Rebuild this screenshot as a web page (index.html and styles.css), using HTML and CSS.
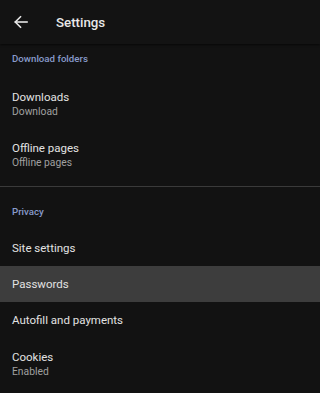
FILE: index.html
```html
<!DOCTYPE html>
<html>
<head>
<meta charset="utf-8">
<link rel="stylesheet" href="styles.css">
</head>
<body>
<div class="app">
  <header class="toolbar">
    <svg class="back" width="16" height="16" viewBox="0 0 16 16" fill="none" stroke="#e8e8e8" stroke-width="1.6" stroke-linecap="square">
      <path d="M14 8H2.5"/>
      <path d="M7.5 2.8L2.3 8l5.2 5.2"/>
    </svg>
    <div class="title">Settings</div>
  </header>
  <div class="section-title first">Download folders</div>
  <div class="item two">
    <div class="item-title">Downloads</div>
    <div class="item-sub">Download</div>
  </div>
  <div class="item two">
    <div class="item-title">Offline pages</div>
    <div class="item-sub">Offline pages</div>
  </div>
  <div class="divider"></div>
  <div class="section-title second">Privacy</div>
  <div class="item one"><div class="item-title">Site settings</div></div>
  <div class="item one active"><div class="item-title">Passwords</div></div>
  <div class="item one"><div class="item-title">Autofill and payments</div></div>
  <div class="item two">
    <div class="item-title">Cookies</div>
    <div class="item-sub">Enabled</div>
  </div>
</div>
</body>
</html>
```
FILE: styles.css
```css
html, body {
  margin: 0;
  padding: 0;
  background: #121212;
}
body {
  font-family: Roboto, "Noto Sans", sans-serif;
  color: #e4e4e4;
}
.app {
  width: 320px;
  height: 393px;
  overflow: hidden;
  background: #121212;
}
.toolbar {
  height: 44px;
  display: flex;
  align-items: center;
  background: #131313;
  box-shadow: 0 1px 2px rgba(0,0,0,0.6);
  position: relative;
}
.back {
  margin-left: 13px;
  width: 16px;
  height: 16px;
}
.title {
  margin-left: 27px;
  font-size: 13.3px;
  font-weight: 500;
  color: #e8e8e8;
}
.section-title {
  padding: 0 12px;
  font-size: 9.7px;
  font-weight: 500;
  line-height: 14px;
  color: #889bcb;
}
.section-title.first {
  padding-top: 8px;
  padding-bottom: 12px;
}
.section-title.second {
  padding-top: 18px;
  padding-bottom: 11px;
}
.item {
  padding: 0 12px;
}
.item.two {
  padding-top: 11px;
  padding-bottom: 10px;
}
.item.one {
  height: 36px;
  display: flex;
  align-items: center;
}
.item.active {
  background: #3d3d3d;
}
.item-title {
  font-size: 11.5px;
  line-height: 16px;
  color: #e2e2e2;
}
.item-sub {
  font-size: 10.3px;
  line-height: 14px;
  color: #a0a0a0;
}
.divider {
  height: 1px;
  margin-top: 6px;
  background: #3a3a3a;
}
```
